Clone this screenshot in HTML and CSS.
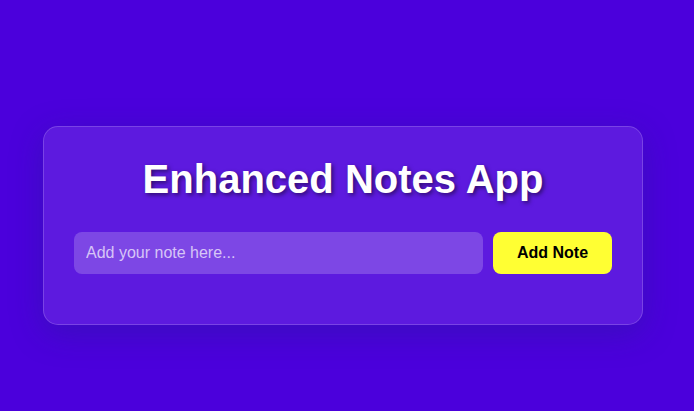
FILE: index.html
```html
<!DOCTYPE html>
<html lang="en">
<head>
<meta charset="utf-8">
<title>Enhanced Notes App</title>
<link rel="stylesheet" href="styles.css">
</head>
<body>
<main class="container">
<h1 class="title">Enhanced Notes App</h1>
<div class="note-form">
<input class="note-input" type="text" placeholder="Add your note here...">
<button class="add-button">Add Note</button>
</div>
</main>
</body>
</html>
```
FILE: styles.css
```css
* { box-sizing: border-box; }
body {
  margin: 0;
  padding-right: 8px;
  height: 411px;
  overflow: hidden;
  display: flex;
  justify-content: center;
  align-items: center;
  padding-top: 40px;
  background: #4b00dc;
  font-family: "Liberation Sans", Arial, sans-serif;
}
.container {
  width: 600px;
  height: 199px;
  padding: 30px;
  border: 1px solid rgba(255, 255, 255, 0.18);
  border-radius: 15px;
  background: rgba(255, 255, 255, 0.1);
  box-shadow: 0 8px 32px rgba(31, 38, 135, 0.37);
}
.title {
  margin: 0 0 30px;
  font-size: 40px;
  line-height: 45px;
  text-align: center;
  color: #fff;
  text-shadow: 2px 2px 4px rgba(0, 0, 0, 0.5);
}
.note-form { display: flex; gap: 10px; }
.note-input {
  flex: 1;
  min-width: 0;
  height: 42px;
  padding: 12px;
  border: 0;
  border-radius: 8px;
  background: rgba(255, 255, 255, 0.2);
  color: #fff;
  font: 16px "Liberation Sans", Arial, sans-serif;
}
.note-input::placeholder { color: rgba(255, 255, 255, 0.7); }
.add-button {
  width: 119px;
  height: 42px;
  padding: 0;
  border: 0;
  border-radius: 8px;
  background: #ffff33;
  color: #000;
  font: bold 16px "Liberation Sans", Arial, sans-serif;
}
```
